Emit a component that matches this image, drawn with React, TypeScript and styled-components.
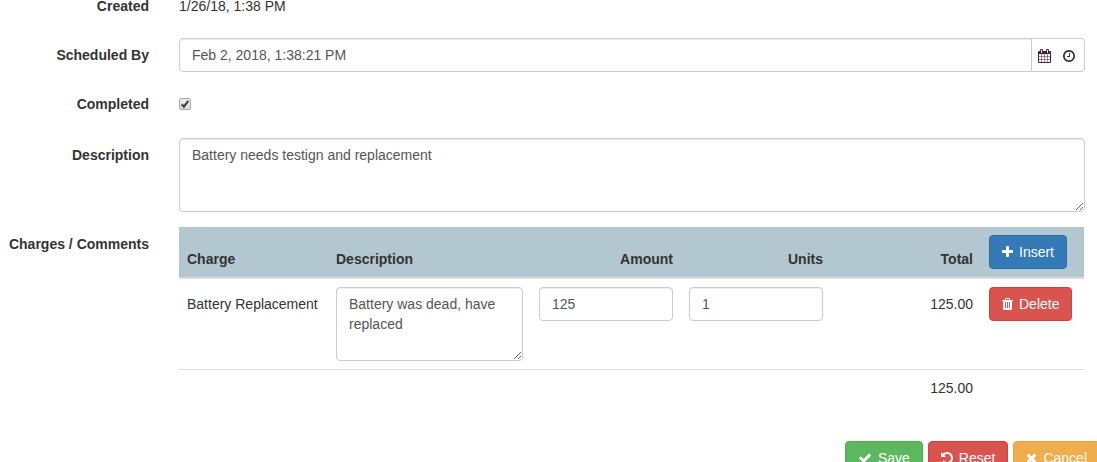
import React from "react";
import styled, { createGlobalStyle } from "styled-components";

const GlobalStyle = createGlobalStyle`
  *, *::before, *::after { box-sizing: border-box; }
  body {
    margin: 0;
    overflow: hidden;
    background: #fff;
    color: #333;
    font: 14px/20px "Liberation Sans", Arial, Helvetica, sans-serif;
  }
  input, textarea, button { font: inherit; color: inherit; margin: 0; }
`;

const Form = styled.form`
  display: flex;
  flex-direction: column;
  gap: 15px;
  margin-top: -11px;
  margin-right: 12px;
`;

const Row = styled.div`
  display: grid;
  grid-template-columns: 149px minmax(0, 1fr);
  column-gap: 30px;
  align-items: start;
`;

const labelText = `
  padding: 7px 0;
  font-weight: 700;
  text-align: right;
  white-space: nowrap;
`;

const Label = styled.label`
  ${labelText}
`;

const Caption = styled.div`
  ${labelText}
`;

const StaticText = styled.output`
  display: block;
  padding: 7px 0;
`;

const control = `
  display: block;
  width: 100%;
  padding: 6px 12px;
  border: 1px solid #ccc;
  border-radius: 4px;
  background: #fff;
  box-shadow: inset 0 1px 1px rgba(0, 0, 0, 0.075);
`;

const TextInput = styled.input<{ $grouped?: boolean }>`
  ${control}
  && {
    color: #555;
  }
  height: 34px;
  ${(p) => p.$grouped && "flex: 1; min-width: 0; border-radius: 4px 0 0 4px;"}
`;

const TextArea = styled.textarea`
  ${control}
  && {
    color: #555;
  }
  height: 74px;
  resize: both;
`;

const InputGroup = styled.div`
  display: flex;
`;

const Addon = styled.div`
  display: flex;
  align-items: center;
  gap: 12px;
  padding: 2px 9px 0 6px;
  border: 1px solid #ccc;
  border-left: 0;
  border-radius: 0 4px 4px 0;
`;

const IconButton = styled.button<{ $tone: string }>`
  display: flex;
  padding: 0;
  border: 0;
  background: none;
  && {
    color: ${(p) => p.$tone};
  }
`;

const CheckField = styled.div`
  padding: 11px 0 13px;
`;

const Checkbox = styled.input`
  appearance: none;
  display: block;
  width: 12px;
  height: 12px;
  border: 1px solid #a9a9a9;
  border-radius: 2px;
  background: linear-gradient(#ededed, #dedede);
  &:checked {
    background:
      url("data:image/svg+xml,%3Csvg xmlns='http://www.w3.org/2000/svg' viewBox='0 0 10 10'%3E%3Cpath d='M1.7 5.2l2.2 2.5L8.3 1.9' fill='none' stroke='%23444' stroke-width='2.2'/%3E%3C/svg%3E"),
      linear-gradient(#ededed, #dedede);
  }
`;

const Table = styled.table`
  width: calc(100% - 1px);
  margin-bottom: 20px;
  table-layout: fixed;
  border-collapse: separate;
  border-spacing: 0;
`;

const Col = styled.col<{ $width?: number }>`
  ${(p) => p.$width && `width: ${p.$width}px;`}
`;

const HeadCell = styled.th<{ $right?: boolean }>`
  padding: 8px;
  border-bottom: 2px solid #ddd;
  background: #b3c7d0;
  vertical-align: bottom;
  text-align: ${(p) => (p.$right ? "right" : "left")};
`;

const ActionHeadCell = styled.td`
  padding: 8px;
  border-bottom: 2px solid #ddd;
  background: #b3c7d0;
`;

const Cell = styled.td<{ $right?: boolean; $line?: boolean }>`
  padding: 8px;
  vertical-align: top;
  text-align: ${(p) => (p.$right ? "right" : "left")};
  ${(p) => p.$line && "border-top: 1px solid #ddd;"}
`;

const CellText = styled.div`
  padding: 7px 0;
  white-space: nowrap;
`;

const tones = {
  primary: ["#337ab7", "#2e6da4"],
  danger: ["#d9534f", "#d43f3a"],
  success: ["#5cb85c", "#4cae4c"],
  warning: ["#f0ad4e", "#eea236"],
};

const Button = styled.button<{ $tone: keyof typeof tones }>`
  display: inline-flex;
  align-items: center;
  gap: 6px;
  padding: 6px 12px;
  border: 1px solid ${(p) => tones[p.$tone][1]};
  border-radius: 4px;
  background: ${(p) => tones[p.$tone][0]};
  white-space: nowrap;
  cursor: pointer;
  && {
    color: #fff;
  }
`;

const Actions = styled.div`
  display: flex;
  justify-content: flex-end;
  gap: 5px;
  margin-right: -15px;
`;

const Glyph = styled.svg`
  display: block;
  flex: none;
  fill: currentColor;
`;

const icons = {
  plus: {
    advance: 1408,
    d: "M1600 736v192q0 40-28 68t-68 28h-416v416q0 40-28 68t-68 28h-192q-40 0-68-28t-28-68v-416h-416q-40 0-68-28t-28-68v-192q0-40 28-68t68-28h416v-416q0-40 28-68t68-28h192q40 0 68 28t28 68v416h416q40 0 68 28t28 68z",
  },
  trash: {
    advance: 1408,
    d: "M704 1376v-704q0-14-9-23t-23-9h-64q-14 0-23 9t-9 23v704q0 14 9 23t23 9h64q14 0 23-9t9-23zm256 0v-704q0-14-9-23t-23-9h-64q-14 0-23 9t-9 23v704q0 14 9 23t23 9h64q14 0 23-9t9-23zm256 0v-704q0-14-9-23t-23-9h-64q-14 0-23 9t-9 23v704q0 14 9 23t23 9h64q14 0 23-9t9-23zm-544-992h448l-48-117q-7-9-17-11h-317q-10 2-17 11zm928 32v64q0 14-9 23t-23 9h-96v948q0 83-47 143.5t-113 60.5h-832q-66 0-113-58.5t-47-141.5v-952h-96q-14 0-23-9t-9-23v-64q0-14 9-23t23-9h309l70-167q15-37 54-63t79-26h320q40 0 79 26t54 63l70 167h309q14 0 23 9t9 23z",
  },
  check: {
    advance: 1792,
    d: "M1671 566q0 40-28 68l-724 724-136 136q-28 28-68 28t-68-28l-136-136-362-362q-28-28-28-68t28-68l136-136q28-28 68-28t68 28l294 295 656-657q28-28 68-28t68 28l136 136q28 28 28 68z",
  },
  undo: {
    advance: 1536,
    d: "M1664 896q0 156-61 298t-164 245-245 164-298 61q-172 0-327-72.5t-264-204.5q-7-10-6.5-22.5t8.5-20.5l137-138q10-9 25-9 16 2 23 12 73 95 179 147t225 52q104 0 198.5-40.5t163.5-109.5 109.5-163.5 40.5-198.5-40.5-198.5-109.5-163.5-163.5-109.5-198.5-40.5q-98 0-188 35.5t-160 101.5l137 138q31 30 14 69-17 40-59 40h-448q-26 0-45-19t-19-45v-448q0-42 40-59 39-17 69 14l130 129q107-101 244.5-156.5t284.5-55.5q156 0 298 61t245 164 164 245 61 298z",
  },
  times: {
    advance: 1408,
    d: "M1490 1322q0 40-28 68l-136 136q-28 28-68 28t-68-28l-294-294-294 294q-28 28-68 28t-68-28l-136-136q-28-28-28-68t28-68l294-294-294-294q-28-28-28-68t28-68l136-136q28-28 68-28t68 28l294 294 294-294q28-28 68-28t68 28l136 136q28 28 28 68t-28 68l-294 294 294 294q28 28 28 68z",
  },
  calendar: {
    advance: 1664,
    d: "M192 1664h288v-288h-288v288zm352 0h320v-288h-320v288zm-352-352h288v-320h-288v320zm352 0h320v-320h-320v320zm-352-384h288v-288h-288v288zm736 736h320v-288h-320v288zm-384-736h320v-288h-320v288zm768 736h288v-288h-288v288zm-384-352h320v-320h-320v320zm-352-864v-288q0-13-9.5-22.5t-22.5-9.5h-64q-13 0-22.5 9.5t-9.5 22.5v288q0 13 9.5 22.5t22.5 9.5h64q13 0 22.5-9.5t9.5-22.5zm736 864h288v-320h-288v320zm-384-384h320v-288h-320v288zm384 0h288v-288h-288v288zm32-480v-288q0-13-9.5-22.5t-22.5-9.5h-64q-13 0-22.5 9.5t-9.5 22.5v288q0 13 9.5 22.5t22.5 9.5h64q13 0 22.5-9.5t9.5-22.5zm384-64v1280q0 52-38 90t-90 38h-1408q-52 0-90-38t-38-90v-1280q0-52 38-90t90-38h128v-96q0-66 47-113t113-47h64q66 0 113 47t47 113v96h384v-96q0-66 47-113t113-47h64q66 0 113 47t47 113v96h128q52 0 90 38t38 90z",
  },
  clock: {
    advance: 1536,
    d: "M1024 544v448q0 14-9 23t-23 9h-320q-14 0-23-9t-9-23v-64q0-14 9-23t23-9h224v-352q0-14 9-23t23-9h64q14 0 23 9t9 23zm416 352q0-148-73-273t-198-198-273-73-273 73-198 198-73 273 73 273 198 198 273 73 273-73 198-198 73-273zm224 0q0 209-103 385.5t-279.5 279.5-385.5 103-385.5-103-279.5-279.5-103-385.5 103-385.5 279.5-279.5 385.5-103 385.5 103 279.5 279.5 103 385.5z",
  },
};

function Icon({ name }: { name: keyof typeof icons }) {
  const { advance, d } = icons[name];
  return (
    <Glyph
      aria-hidden="true"
      width={advance / 128}
      height={14}
      viewBox={`${(1792 - advance) / 2} 0 ${advance} 1792`}
    >
      <path d={d} />
    </Glyph>
  );
}

export default function App() {
  return (
    <>
      <GlobalStyle />
      <Form onSubmit={(e) => e.preventDefault()}>
        <Row>
          <Label htmlFor="created">Created</Label>
          <StaticText id="created">1/26/18, 1:38 PM</StaticText>
        </Row>
        <Row>
          <Label htmlFor="scheduled">Scheduled By</Label>
          <InputGroup>
            <TextInput id="scheduled" $grouped defaultValue="Feb 2, 2018, 1:38:21 PM" />
            <Addon>
              <IconButton type="button" aria-label="Pick a date" $tone="#4a1f4a">
                <Icon name="calendar" />
              </IconButton>
              <IconButton type="button" aria-label="Pick a time" $tone="#333">
                <Icon name="clock" />
              </IconButton>
            </Addon>
          </InputGroup>
        </Row>
        <Row>
          <Label htmlFor="completed">Completed</Label>
          <CheckField>
            <Checkbox id="completed" type="checkbox" defaultChecked />
          </CheckField>
        </Row>
        <Row>
          <Label htmlFor="description">Description</Label>
          <TextArea id="description" defaultValue="Battery needs testign and replacement" />
        </Row>
        <Row>
          <Caption id="charges">Charges / Comments</Caption>
          <Table aria-labelledby="charges">
            <colgroup>
              <Col $width={149} />
              <Col />
              <Col $width={150} />
              <Col $width={150} />
              <Col $width={150} />
              <Col $width={103} />
            </colgroup>
            <thead>
              <tr>
                <HeadCell>Charge</HeadCell>
                <HeadCell>Description</HeadCell>
                <HeadCell $right>Amount</HeadCell>
                <HeadCell $right>Units</HeadCell>
                <HeadCell $right>Total</HeadCell>
                <ActionHeadCell>
                  <Button type="button" $tone="primary">
                    <Icon name="plus" />
                    Insert
                  </Button>
                </ActionHeadCell>
              </tr>
            </thead>
            <tbody>
              <tr>
                <Cell>
                  <CellText>Battery Replacement</CellText>
                </Cell>
                <Cell>
                  <TextArea aria-label="Charge description" defaultValue="Battery was dead, have replaced" />
                </Cell>
                <Cell>
                  <TextInput aria-label="Amount" defaultValue="125" />
                </Cell>
                <Cell>
                  <TextInput aria-label="Units" defaultValue="1" />
                </Cell>
                <Cell $right>
                  <CellText>125.00</CellText>
                </Cell>
                <Cell>
                  <Button type="button" $tone="danger">
                    <Icon name="trash" />
                    Delete
                  </Button>
                </Cell>
              </tr>
              <tr>
                <Cell $line colSpan={4} />
                <Cell $line $right>
                  125.00
                </Cell>
                <Cell $line />
              </tr>
            </tbody>
          </Table>
        </Row>
        <Actions>
          <Button type="submit" $tone="success">
            <Icon name="check" />
            Save
          </Button>
          <Button type="reset" $tone="danger">
            <Icon name="undo" />
            Reset
          </Button>
          <Button type="button" $tone="warning">
            <Icon name="times" />
            Cancel
          </Button>
        </Actions>
      </Form>
    </>
  );
}
